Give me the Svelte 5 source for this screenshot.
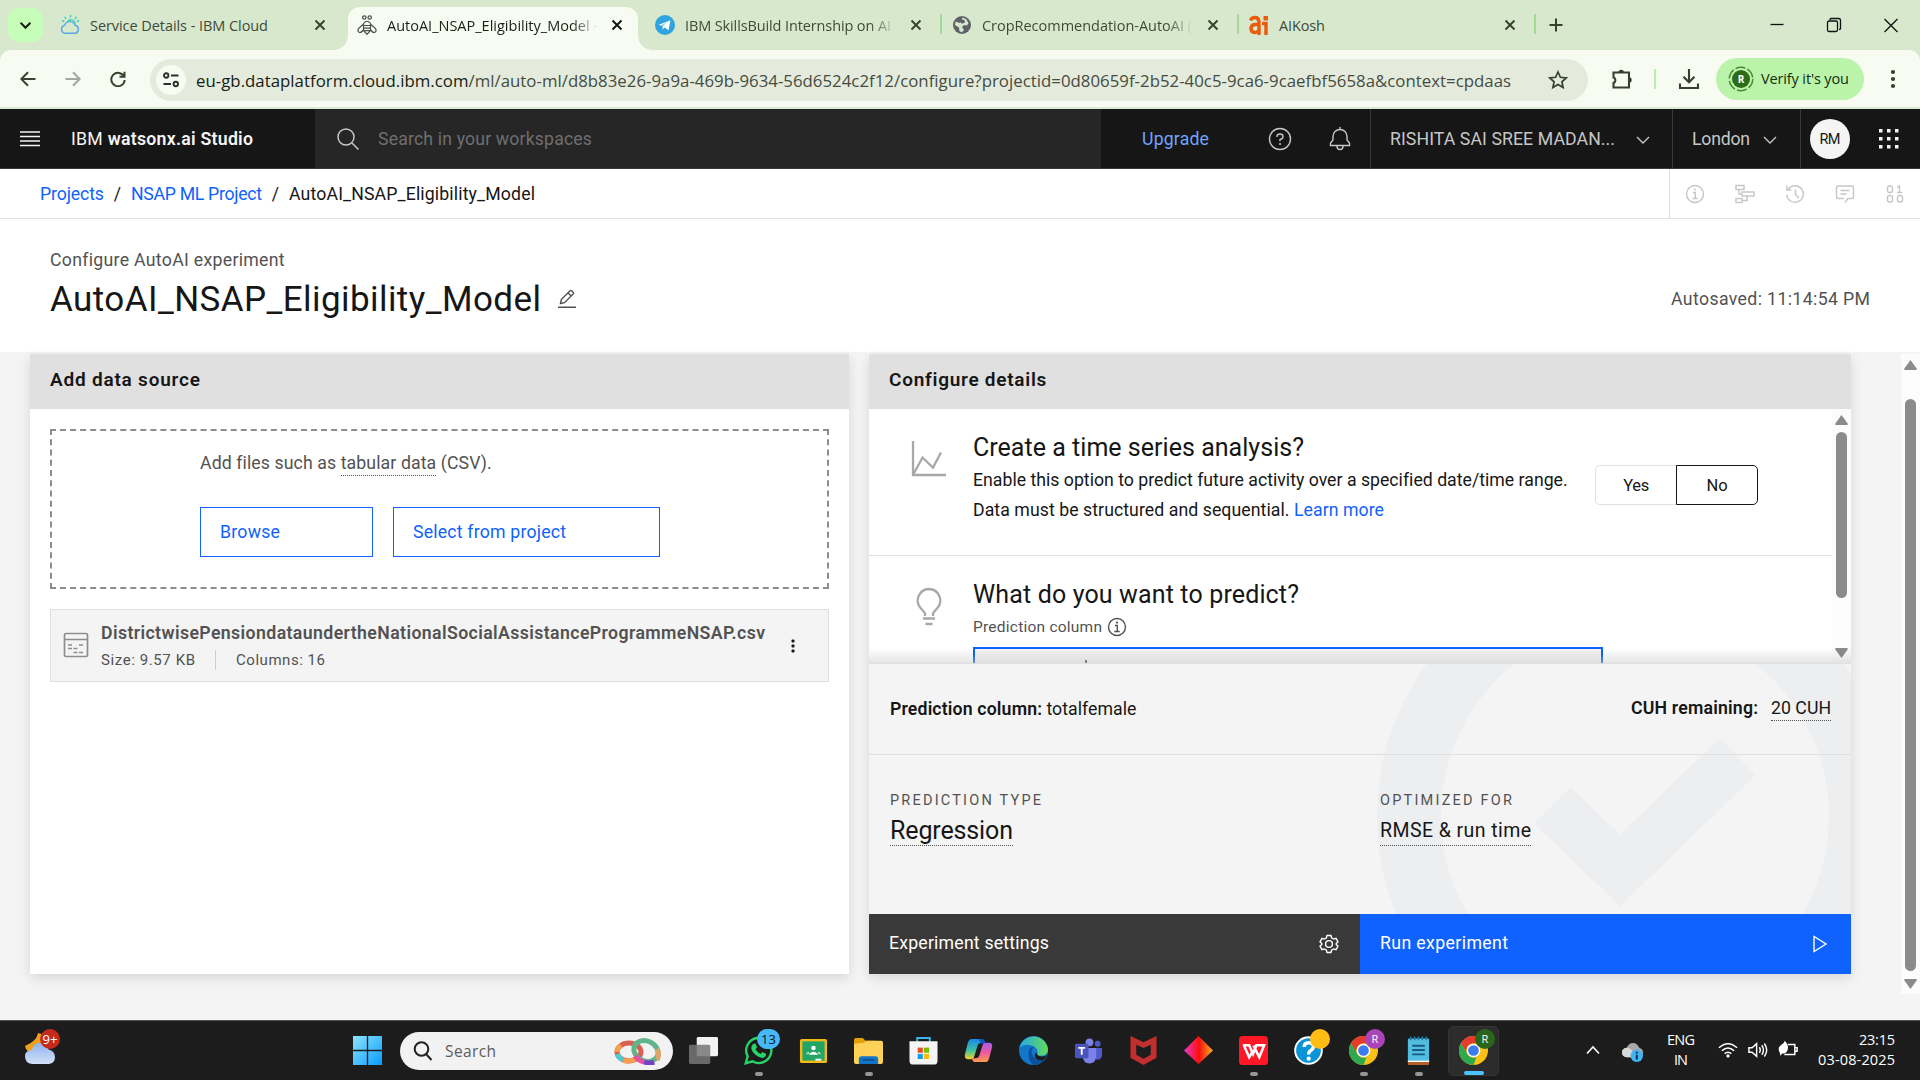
<script>
  // Spreads a label's letters so that it occupies the given width.
  function fit(node, width) {
    const chars = node.textContent.trim().length;
    const natural = node.getBoundingClientRect().width;
    node.style.letterSpacing = `${(width - natural) / Math.max(1, chars - 1)}px`;
    node.style.width = `${width}px`;
  }

  const tabs = [
    { icon: 'cloud', title: 'Service Details - IBM Cloud', width: 178 },
    { icon: 'bee', title: 'AutoAI_NSAP_Eligibility_Model -', width: 211, active: true },
    { icon: 'telegram', title: 'IBM SkillsBuild Internship on AI', width: 206, sep: true },
    { icon: 'globe', title: 'CropRecommendation-AutoAI (', width: 210, sep: true },
    { icon: 'kosh', title: 'AIKosh', width: 46, sep: true }
  ];

  const apps = [
    { id: 'taskview' },
    { id: 'whatsapp', badge: '13', tone: 'blue', open: true },
    { id: 'classroom' },
    { id: 'folder', open: true },
    { id: 'store' },
    { id: 'copilot' },
    { id: 'edge' },
    { id: 'teams' },
    { id: 'mcafee' },
    { id: 'diamond' },
    { id: 'wps', open: true },
    { id: 'help', badge: ' ', tone: 'yellow' },
    { id: 'chrome', badge: 'R', tone: 'purple', open: true },
    { id: 'notepad', open: true },
    { id: 'chrome', badge: 'R', tone: 'green', open: true, current: true }
  ];
</script>

{#snippet cross()}
  <svg class="x" viewBox="0 0 12 12"><path d="M1.5 1.5l9 9M10.5 1.5l-9 9" /></svg>
{/snippet}

{#snippet chevron()}
  <svg class="chev" viewBox="0 0 14 8"><path d="M1 1l6 6 6-6" /></svg>
{/snippet}

{#snippet favicon(id)}
  <svg class="fav" viewBox="0 0 20 20">
    {#if id === 'cloud'}
      <g fill="none" stroke="#5aa9e6" stroke-width="1.4">
        <path d="M5 18.3a4.1 4.1 0 0 1-.4-8 5.6 5.6 0 0 1 10.500 0 4.100 4.100 0 0 1 .2 8z" />
        <path stroke="#3fd0c0" d="M7.500 6.800a4 4 0 0 1 7.400 2.600M10.500 0v2.500M4.500 1.800l1.500 2.100M16.500 1.800l-1.500 2.100M2 5.500l2.200 1M19 5.500l-2 1" />
      </g>
    {:else if id === 'bee'}
      <g fill="none" stroke="#4c4f4a" stroke-width="1.200">
        <circle cx="7.300" cy="2.500" r="1.700" /><circle cx="12.700" cy="2.500" r="1.700" />
        <path d="M6.500 8.500q3.500-4.500 7 0v7l-3.500 3.800-3.500-3.800zM6.500 10.500h7M6.500 13.200h7M6.500 15.700h7M6 9.500L1.500 13.500q-1.500 3.300 1 4 2.500 0 3.500-2.500M14 9.500l4.500 4q1.500 3.300-1 4-2.500 0-3.500-2.500" />
      </g>
    {:else if id === 'telegram'}
      <circle cx="10" cy="10" r="10" fill="#2fa4de" />
      <path fill="#fff" d="M3.800 9.800L15.500 5.200l-2 10-3.800-2.800-1.900 1.900-.3-3.200 5-4.300-6.200 4z" />
    {:else if id === 'globe'}
      <circle cx="10" cy="10" r="9" fill="#5f6368" />
      <path fill="#d7e8cc" d="M10 2.500l4 1.500 2.500 4-1.500 2.500-3-.5-2 2 2 3-2 2.200-2.500-1-.5-3.700L3 10l.5-3.500L7.500 8l3-2z" />
      <path fill="#5f6368" d="M8.500 4.500l4 .5.5 2.500-3 1.200-2-1.700z" />
    {:else}
      <g fill="none" stroke="#ea5b0c" stroke-width="3.400">
        <path d="M1.500 5.500q1-3 4.500-3t4 4V20M9.500 9.500H6Q2 10 2 13.500t3.500 4q3 0 4.500-2.500M13 8.500h4V20" />
      </g>
      <rect x="14.500" y="1" width="4.500" height="4.500" fill="#ea5b0c" />
    {/if}
  </svg>
{/snippet}

{#snippet appIcon(id)}
  <svg class="app-icon" viewBox="0 0 30 30">
    {#if id === 'taskview'}
      <rect x="8" y="1" width="22" height="20" rx="1.500" fill="#f2f2f2" />
      <rect x="0" y="9" width="22" height="20" rx="1.500" fill="#777" fill-opacity=".85" />
    {:else if id === 'whatsapp'}
      <path fill="#1c1c1c" stroke="#25d366" stroke-width="2.500" d="M1.800 28.200l2-7.200a13 13 0 1 1 5 5.200z" />
      <path fill="#25d366" d="M9.500 8.300q1.500-1.300 2.600 0l1.300 3.200q-.3 1.200-1.500 2.300 2 3.700 5.200 4.800l1.900-2 3.600 1.700q.7 1-.7 3.200-2.500 2.400-7 0-6-3-7.300-8.200-.4-3.200 1.900-5z" />
    {:else if id === 'classroom'}
      <rect x="1" y="3" width="28" height="25" rx="2" fill="#f6b813" />
      <rect x="3.500" y="5.500" width="23" height="20" fill="#23a566" />
      <g fill="#fff"><circle cx="15" cy="12.500" r="2.300" /><path d="M10 19.500q5-6.500 10 0z" /><path fill="#a8dcc1" d="M7 18.800q3-4.500 4-1l-1.500 1zM23 18.800q-3-4.500-4-1l1.500 1z" /><rect x="17" y="23.500" width="6" height="2" /></g>
    {:else if id === 'folder'}
      <path fill="#e3a008" d="M0 4q0-2 2-2h7l3 3h10v7H0z" />
      <path fill="#ffd257" d="M0 8l10-1 3-2h15q2 0 2 2v20q0 2-2 2H2q-2 0-2-2z" />
      <path fill="#1374c8" d="M5 29v-5q0-3 3-3h14q3 0 3 3v5z" /><path stroke="#0b4a86" stroke-width="1.500" d="M9 24.700h12" />
    {:else if id === 'store'}
      <path fill="none" stroke="#37b6f2" stroke-width="2" d="M8.500 8V2h13v6" />
      <path fill="#f4f4f4" d="M.5 5.500h29v20q0 4-4 4h-21q-4 0-4-4z" />
      <path fill="#e84c22" d="M9 12h5.300v5.300H9z" /><path fill="#7fba00" d="M15.500 12h5.300v5.300h-5.300z" /><path fill="#0f9ae5" d="M9 18.500h5.300v5.300H9z" /><path fill="#fdb900" d="M15.500 18.500h5.300v5.300h-5.300z" />
    {:else if id === 'copilot'}
      <defs>
        <linearGradient id="cpA" x1="0" y1="0" x2="0" y2="1"><stop offset="0" stop-color="#1888e8" /><stop offset=".55" stop-color="#39bfa6" /><stop offset="1" stop-color="#f4d422" /></linearGradient>
        <linearGradient id="cpB" x1="0" y1="0" x2="0" y2="1"><stop offset="0" stop-color="#a85bea" /><stop offset=".5" stop-color="#ec5aa0" /><stop offset="1" stop-color="#ff9b4a" /></linearGradient>
      </defs>
      <path fill="url(#cpA)" d="M8 3h10q3 0 4 4h-4q-3 0-4 3l-3 10q-1 4-4 4H4q-4 0-3-5L4 7q1-4 4-4z" />
      <path fill="#1254c4" d="M15 3h3.500Q21 3 22 8h-4.500z" />
      <path fill="url(#cpB)" d="M22 27H12q-3 0-4-4h4q3 0 4-3l3-10q1-3 4-3h3q4 0 3 5l-3 11q-1 4-4 4z" />
    {:else if id === 'edge'}
      <defs><linearGradient id="edA" x1="0" y1="0" x2="1" y2="0"><stop offset="0" stop-color="#2aa8e4" /><stop offset="1" stop-color="#5fdc5a" /></linearGradient></defs>
      <circle cx="15" cy="15" r="15" fill="#1377c9" />
      <path fill="url(#edA)" d="M.5 12A15 15 0 0 1 30 14q0 6-7 6.500-5 0-4-3 1-4-4-7Q6 7 .5 12z" />
      <path fill="#1c1c1c" d="M19 17q-2 3 4 4.300 4 .3 6.500-2.300-2 4.500-5 7-7-.5-8-5-.5-3 2.500-4z" />
      <path fill="#0c4f9e" d="M10 17q0-6 6-6-5 3-2 9t12 5q-5 5-11 5Q9 25 10 17z" />
    {:else if id === 'teams'}
      <circle cx="16" cy="6.500" r="4" fill="#7b83eb" /><circle cx="24.500" cy="8" r="3" fill="#5059c9" />
      <path fill="#5059c9" d="M20 12.500h9v8q-1 4.500-6 4z" /><path fill="#7b83eb" d="M9 12.500h14v9q-1 7-7 7t-7-7z" />
      <rect x="1" y="8" width="14" height="15" rx="1.500" fill="#4b53bc" /><path fill="none" stroke="#fff" stroke-width="1.900" d="M4.500 12.200h7M8 12.200V19.500" />
    {:else if id === 'mcafee'}
      <path fill="#c22f2f" d="M1.500 0L15 6.500 28.500 0v22.500L15 30 1.500 22.500z" /><path fill="#1c1c1c" d="M7.500 9v10.300L15 23.500l7.500-4.200V9L15 12.500z" />
    {:else if id === 'diamond'}
      <defs><linearGradient id="dmA"><stop offset="0" stop-color="#e23ad0" /><stop offset=".5" stop-color="#ff1010" /><stop offset=".52" stop-color="#f01010" /><stop offset="1" stop-color="#ffb01c" /></linearGradient></defs>
      <path fill="url(#dmA)" d="M15 0l15 15-15 14L0 15z" />
    {:else if id === 'wps'}
      <rect width="30" height="30" rx="4" fill="#ff1726" />
      <path fill="none" stroke="#fff" stroke-width="2.600" d="M4 9.500h6.500l4 9 3.500-9h8l-5 12.500-6-12M5 9.500l5.500 12.500 4-7" />
    {:else if id === 'help'}
      <circle cx="15" cy="15" r="13.800" fill="#0a94d8" stroke="#fff" stroke-width="2" />
      <path fill="none" stroke="#fff" stroke-width="3.600" d="M10.500 11.500q0-4.500 4.800-4.500t4.700 4.200q0 2.500-3 4-1.800 1-1.800 4" /><circle cx="15.200" cy="23.500" r="2.200" fill="#fff" />
    {:else if id === 'chrome'}
      <circle cx="15" cy="15" r="15" fill="#fbc116" />
      <path fill="#e33b2e" d="M2 7.500A15 15 0 0 1 28 7.500H15a7.500 7.500 0 0 0-6.500 11.200z" />
      <path fill="#2da94f" d="M2 7.500l6.500 11.200A7.500 7.500 0 0 0 18 21.900L15 30A15 15 0 0 1 2 7.500z" />
      <circle cx="15" cy="15" r="7" fill="#fff" /><circle cx="15" cy="15" r="5.500" fill="#3a7cec" />
    {:else}
      <rect x="4" y="2.500" width="22" height="26" rx="1.500" fill="#53bde0" />
      <path fill="#fff" d="M4 25.500h22v1.500H4z" /><path fill="#b5622a" d="M4 27h22v2q0 1-1 1H5q-1 0-1-1z" />
      <path stroke="#155a80" stroke-width="2" d="M8.500 10h13M8.500 14.500h13M8.500 19h13" /><path stroke="#1e7ba6" stroke-width="1.600" d="M7 .5v4M11 .5v4M15 .5v4M19 .5v4M23 .5v4" />
    {/if}
  </svg>
{/snippet}

<div class="screen">
  <div class="tabstrip">
    <div class="tab-menu"><svg viewBox="0 0 12 8"><path d="M1.500 1.500L6 6l4.500-4.500" /></svg></div>
    <div class="tabs">
      {#each tabs as tab}
        <div class="tab" class:active={tab.active}>
          {@render favicon(tab.icon)}
          <div class="tab-title" class:faded={tab.width > 200}><span class="t" use:fit={tab.width}>{tab.title}</span></div>
          {@render cross()}
          {#if tab.sep}<i class="tab-sep"></i>{/if}
        </div>
      {/each}
    </div>
    <svg class="plus" viewBox="0 0 14 14"><path d="M7 .5v13M.5 7h13" /></svg>
    <div class="window-buttons">
      <svg viewBox="0 0 16 16"><path d="M1.500 7.500h13" /></svg>
      <svg viewBox="0 0 16 16"><rect x="1.500" y="4" width="10" height="10.500" rx="1.500" /><path d="M4 3V2.500q0-1 1-1h7.500q2 0 2 2v8q0 1-1.500 1" /></svg>
      <svg viewBox="0 0 16 16"><path d="M1.500 2l13 13M14.500 2l-13 13" /></svg>
    </div>
  </div>

  <div class="toolbar-back"><div class="toolbar">
    <svg class="nav" viewBox="0 0 16 16"><path d="M15.500 8H1.500M8 1.300L1.300 8 8 14.700" /></svg>
    <svg class="nav off" viewBox="0 0 16 16"><path d="M.5 8h14M8 1.300L14.700 8 8 14.700" /></svg>
    <svg class="nav" viewBox="0 0 16 16"><path d="M14 5.500A6.700 6.700 0 1 0 14.700 9M14.500 .8v5h-5" /></svg>
    <div class="omnibox">
      <div class="site"><svg viewBox="0 0 16 16"><circle cx="3.200" cy="3.500" r="2.200" /><path d="M8 3.500h7.500M.5 12h7.500" /><circle cx="12.800" cy="12" r="2.200" /></svg></div>
      <span class="t url" use:fit={1315}><b>eu-gb.dataplatform.cloud.ibm.com</b>/ml/auto-ml/d8b83e26-9a9a-469b-9634-56d6524c2f12/configure?projectid=0d80659f-2b52-40c5-9ca6-9caefbf5658a&amp;context=cpdaas</span>
      <svg class="star" viewBox="0 0 20 20"><path d="M10 2l2.400 5.300 5.800.6-4.300 3.900 1.200 5.700L10 14.600l-5.100 2.900 1.200-5.700L1.800 7.900l5.800-.6z" /></svg>
    </div>
    <svg class="tool puzzle" viewBox="0 0 22 22"><path d="M2.500 4.500h15.500v15H2.500v-4.700a2.800 2.800 0 0 0 0-5.300z" /><path class="solid" d="M7.500 4.500a2.700 2.700 0 0 1 5.400 0zM18 9.300a2.700 2.700 0 0 1 0 5.400z" /></svg>
    <i class="tool-sep"></i>
    <svg class="tool" viewBox="0 0 22 22"><path d="M11 1v13M5.500 8.800L11 14.300l5.500-5.500M2 15.500V20h18v-4.500" /></svg>
    <div class="verify">
      <svg viewBox="0 0 26 26"><circle class="dash" cx="13" cy="13" r="11.700" /><circle class="disc" cx="13" cy="13" r="9" /><text x="13" y="16.500">R</text></svg>
      <span class="t" use:fit={88}>Verify it's you</span>
    </div>
    <svg class="kebab" viewBox="0 0 6 20"><circle cx="3" cy="3" r="2.100" /><circle cx="3" cy="10" r="2.100" /><circle cx="3" cy="17" r="2.100" /></svg>
  </div></div>

  <header class="ibm">
    <div class="brand">
      <svg viewBox="0 0 20 16"><path d="M0 1h20M0 5.500h20M0 10h20M0 14.500h20" /></svg>
      <span class="t" use:fit={182}>IBM <b>watsonx.ai Studio</b></span>
    </div>
    <div class="search">
      <svg viewBox="0 0 24 24"><circle cx="10" cy="10" r="8" /><path d="M16 16l6.500 6.500" /></svg>
      <span class="t" use:fit={214}>Search in your workspaces</span>
    </div>
    <div class="upgrade"><span class="t" use:fit={67}>Upgrade</span></div>
    <div class="cell"><svg class="hi" viewBox="0 0 24 24"><circle cx="12" cy="12" r="10.500" /><path d="M9 10V9.500Q9 7 12 7t3 2.500-3 3v1.800" /><circle class="dot" cx="12" cy="17" r="1" /></svg></div>
    <div class="cell"><svg class="hi" viewBox="0 0 24 24"><path d="M12 0v2.500M2.500 18.500v-2.500l2.500-3V9.500a7 7 0 0 1 14 0V13l2.500 3v2.500zM9 18.500v1a3 3 0 0 0 6 0v-1" /></svg></div>
    <div class="account"><span class="t" use:fit={225}>RISHITA SAI SREE MADAN...</span>{@render chevron()}</div>
    <div class="region"><span class="t" use:fit={58}>London</span>{@render chevron()}</div>
    <div class="profile"><div class="avatar"><span class="t" use:fit={21}>RM</span></div></div>
    <svg class="grid" viewBox="0 0 20 20">{#each [0, 8, 16] as y}{#each [0, 8, 16] as x}<rect {x} {y} width="3.500" height="3.500" />{/each}{/each}</svg>
  </header>

  <nav class="crumbs">
    <a class="t" use:fit={64}>Projects</a><i>/</i><a class="t" use:fit={131}>NSAP ML Project</a><i>/</i><span class="t" use:fit={246}>AutoAI_NSAP_Eligibility_Model</span>
    <div class="crumb-tools">
      <svg viewBox="0 0 20 20"><circle cx="10" cy="10" r="8.500" /><path d="M8 8.500h2.300v6M7.500 14.500h5.200" /><circle class="dot" cx="10" cy="5.600" r="1" /></svg>
      <svg viewBox="0 0 20 20"><rect x="1" y="1.500" width="8" height="4" /><rect x="7" y="8" width="12" height="4" /><rect x="1" y="14.500" width="6" height="4" /><path d="M4 5.500V10h3M12 12v4.500H7" /></svg>
      <svg viewBox="0 0 20 20"><path d="M3 5.500a8.300 8.300 0 1 1-1.300 5M1.800 1.500V6h4.500M10.500 5.500v5l3.500 3.500" /></svg>
      <svg viewBox="0 0 20 20"><path d="M10 18.500l2.800-4H17q1.500 0 1.500-1.500V3.500Q18.500 2 17 2H3Q1.500 2 1.500 3.500V13q0 1.500 1.500 1.500h6M5.500 6.500h9M5.500 10h6" /></svg>
      <svg viewBox="0 0 20 20"><rect x="2.500" y="2" width="5" height="6.500" rx="2" /><path d="M12 3.300l2.500-1.300v6.500M12 8.500h5.500" /><rect x="2.500" y="11.500" width="5" height="6.500" rx="2" /><rect x="12.500" y="11.500" width="5" height="6.500" rx="2" /></svg>
    </div>
  </nav>

  <section class="heading">
    <p><span class="t" use:fit={234}>Configure AutoAI experiment</span></p>
    <div class="title-row">
      <h1 class="t" use:fit={491}>AutoAI_NSAP_Eligibility_Model</h1>
      <svg viewBox="0 0 20 20"><path d="M1 18.300h18M3.500 14.500l.8-4L13 1.800q.8-.8 1.600 0l1.600 1.600q.8.800 0 1.600L7.500 13.700zM11 3.800l3.200 3.200" /></svg>
      <span class="t saved" use:fit={199}>Autosaved: 11:14:54 PM</span>
    </div>
  </section>

  <main>
    <div class="card left">
      <h2><span class="t" use:fit={150}>Add data source</span></h2>
      <div class="left-body">
        <div class="drop">
          <p><span class="t" use:fit={291}>Add files such as <u>tabular data</u> (CSV).</span></p>
          <div class="drop-buttons">
            <button class="browse"><span class="t" use:fit={60}>Browse</span></button>
            <button class="select"><span class="t" use:fit={153}>Select from project</span></button>
          </div>
        </div>
        <div class="file">
          <svg class="file-icon" viewBox="0 0 26 26"><rect x="1.500" y="1.500" width="23" height="23" rx="1.500" /><path d="M1.500 7.500h23M5 13h4M16 13h4M5 16.500h4M10.500 16.500h4M10.500 20.500h4M16 20.500h4" /></svg>
          <div class="file-text">
            <span class="t file-name" use:fit={664}>DistrictwisePensiondataundertheNationalSocialAssistanceProgrammeNSAP.csv</span>
            <div class="meta"><span class="t" use:fit={94}>Size: 9.57 KB</span><i></i><span class="t" use:fit={89}>Columns: 16</span></div>
          </div>
          <svg class="file-menu" viewBox="0 0 4 16"><rect x=".5" y="1.500" width="3" height="3" rx="1" /><rect x=".5" y="6.500" width="3" height="3" rx="1" /><rect x=".5" y="11.500" width="3" height="3" rx="1" /></svg>
        </div>
      </div>
    </div>

    <div class="card right">
      <h2><span class="t" use:fit={157}>Configure details</span></h2>
      <div class="scroll">
        <div class="options">
          <div class="option first">
            <svg class="opt-icon" viewBox="0 0 36 36"><path d="M2 0v34h33M2 34l9.500-17.500L22 26.500l8-15" /></svg>
            <div class="opt-text">
              <h3 class="t" use:fit={331}>Create a time series analysis?</h3>
              <p><span class="t" use:fit={594}>Enable this option to predict future activity over a specified date/time range.</span></p>
              <p><span class="t" use:fit={411}>Data must be structured and sequential. <a>Learn more</a></span></p>
            </div>
            <div class="toggle"><button><span class="t" use:fit={26}>Yes</span></button><button class="on"><span class="t" use:fit={21}>No</span></button></div>
          </div>
          <div class="option second">
            <svg class="opt-icon" viewBox="0 0 36 36"><path d="M14 26v-2.500q-1-2-4-5A11.500 11.500 0 0 1 18 -1a11.500 11.500 0 0 1 8 19.500q-3 3-4 5V26M12 28.500h12M14.500 34h7" /></svg>
            <div class="opt-text">
              <h3 class="t" use:fit={326}>What do you want to predict?</h3>
              <div class="label"><span class="t" use:fit={129}>Prediction column</span><svg viewBox="0 0 20 20"><circle cx="10" cy="10" r="8.500" /><path d="M8 8.500h2.300v6M7.300 14.500h5.400" /><circle class="dot" cx="10" cy="5.600" r="1.100" /></svg></div>
              <div class="input"><i></i></div>
            </div>
          </div>
        </div>
        <div class="bar"><i class="up"></i><i class="thumb"></i><i class="down"></i></div>
        <div class="shade"></div>
      </div>
      <div class="summary">
        <svg class="mark" viewBox="0 0 982 250"><circle cx="766" cy="152" r="226" /><path d="M665 159.500l36.500-36L751 170.500 851 74l35.500 37L751 242z" /></svg>
        <div class="row one">
          <span><b class="t" use:fit={152}>Prediction column:</b> <span class="t val" use:fit={90}>totalfemale</span></span>
          <span><b class="t" use:fit={127}>CUH remaining:</b><span class="t dotted cuh" use:fit={60}>20 CUH</span></span>
        </div>
        <div class="row two">
          <div><span class="t cap" use:fit={151}>PREDICTION TYPE</span><span class="t dotted big" use:fit={123}>Regression</span></div>
          <div><span class="t cap" use:fit={132}>OPTIMIZED FOR</span><span class="t dotted mid" use:fit={151}>RMSE &amp; run time</span></div>
        </div>
      </div>
      <div class="actions">
        <button class="settings"><span class="t" use:fit={160}>Experiment settings</span>
          <svg viewBox="0 0 20 20"><path d="M8 1.500h4l.6 2.400 2 1.200 2.400-.7 2 3.400-1.800 1.700v1l1.800 1.700-2 3.400-2.400-.7-2 1.200-.6 2.400H8l-.6-2.400-2-1.200-2.400.7-2-3.400 1.800-1.700v-1L1 7.800l2-3.400 2.400.7 2-1.200z" /><circle cx="10" cy="10" r="3.400" /></svg>
        </button>
        <button class="run"><span class="t" use:fit={128}>Run experiment</span>
          <svg viewBox="0 0 20 20"><path d="M4 2.500v15l12-7.500z" /></svg>
        </button>
      </div>
    </div>
    <div class="bar page-bar"><i class="up"></i><i class="thumb"></i><i class="down"></i></div>
  </main>

  <footer>
    <div class="weather">
      <svg viewBox="0 0 34 40"><path fill="#f0a11c" d="M13 6q-1 8-13 13 1 6 8 7l12-5V8z" /><defs><linearGradient id="wx" x1="0" y1="0" x2="0" y2="1"><stop offset="0" stop-color="#8fb3ee" /><stop offset="1" stop-color="#d3e0f8" /></linearGradient></defs><path fill="url(#wx)" d="M7 37q-7-1-7-7.500T7 23q1-7 8-7t8.500 6.500Q30 24 30 30t-6 7z" /></svg>
      <span class="wx-badge">9+</span>
    </div>
    <svg class="start" viewBox="0 0 30 30"><defs><linearGradient id="win" x1="0" y1="0" x2="1" y2="1"><stop offset="0" stop-color="#8be4ff" /><stop offset="1" stop-color="#0a9bff" /></linearGradient></defs><path fill="url(#win)" d="M0 0h14.300v14.300H0zM15.700 0H30v14.300H15.700zM0 15.700h14.300V30H0zM15.700 15.700H30V30H15.700z" /></svg>
    <div class="find">
      <svg class="lens" viewBox="0 0 20 20"><circle cx="8.500" cy="8" r="6.800" /><path d="M13 13l5.500 6" /></svg>
      <span class="t" use:fit={51}>Search</span>
      <svg class="rings" viewBox="0 0 48 28">
        <g fill="none" stroke-width="5">
          <ellipse cx="15" cy="15" rx="12" ry="9" stroke="#d9604f" />
          <path stroke="#f6a04d" d="M9 23.300q6 2 12-1M3 15q0-4 4-6.500" /><path stroke="#4ecbd2" d="M3.500 17q1 4 5.500 6" />
          <ellipse cx="32" cy="14" rx="12.500" ry="10" transform="rotate(25 32 14)" stroke="#5fb58c" />
          <path stroke="#e94fa0" d="M21 19q4 5 9 6" /><path stroke="#7a3fc8" d="M30 25q6 2 10 0" /><path stroke="#e0a468" d="M43 12q3 6 0 11" />
        </g>
      </svg>
    </div>
    <div class="apps">
      {#each apps as app}
        <div class="app" class:current={app.current} class:open={app.open}>
          {@render appIcon(app.id)}
          {#if app.badge}<span class="badge {app.tone}">{app.badge}</span>{/if}
        </div>
      {/each}
    </div>
    <div class="tray">
      <svg class="tray-chev" viewBox="0 0 14 10"><path d="M1 8.500L7 2l6 6.500" /></svg>
      <svg class="onedrive" viewBox="0 0 22 22"><path fill="#a9a9a9" d="M5 17q-5-.5-5-5t5-5q2-5 6.500-5T18 7q4 1 4 5t-4 5z" /><path fill="#d8d8d8" d="M5 17q-5-.5-5-5t5-5q4 0 6 4l5 6z" /><circle cx="15.500" cy="15.500" r="6.500" fill="#3fb5f5" /><path stroke="#12293a" stroke-width="2" d="M15.500 14.500v5M15.500 11.200v2" /></svg>
      <div class="lang"><span class="t" use:fit={28}>ENG</span><span class="t" use:fit={14}>IN</span></div>
      <svg class="wifi" viewBox="0 0 22 18"><path d="M1 6.500q10-9 20 0M4.200 9.800q6.800-6 13.600 0M7.300 13q3.700-3.200 7.400 0" /><circle cx="11" cy="15.500" r="1.800" /></svg>
      <svg class="sound" viewBox="0 0 22 18"><path d="M1 6.500h3.500L9.500 2v14l-5-4.500H1zM12.500 6q2 3 0 6M15.200 3.800q3.600 5.200 0 10.400M18 1.800q5.200 7.200 0 14.400" /></svg>
      <svg class="battery" viewBox="0 0 22 20"><path d="M11 5h7.500v11H7M19 8.500h2v4h-2" /><path class="leaf" d="M2 14q-3-5 1-8Q7 4 7.500 1q5 5 3 10-1 4-6 4l-2 2.500z" /></svg>
      <div class="clock"><span class="t" use:fit={36}>23:15</span><span class="t" use:fit={77}>03-08-2025</span></div>
    </div>
  </footer>
</div>

<style>
  :global(body) { background: #f4f4f4; overflow: hidden; }
  .screen { width: 1920px; height: 1080px; display: flex; flex-direction: column; font-family: Roboto, "Liberation Sans", sans-serif; font-size: 17.7px; color: #161616; overflow: hidden; }
  .screen *, .screen { box-sizing: border-box; }
  .t { display: inline-block; white-space: nowrap; }
  svg { display: block; flex: none; fill: none; }
  button { font: inherit; color: inherit; background: none; border: 0; padding: 0; display: flex; align-items: center; }
  h1, h2, h3, p { margin: 0; font-weight: 400; }
  i { font-style: normal; }

  .tabstrip, .toolbar, footer { font-family: "Open Sans", "Noto Sans", sans-serif; }
  .tabstrip { height: 50px; flex: none; display: flex; align-items: center; background: #d7e8cc; color: #3f4a3a; font-size: 14.5px; }
  .tab-menu { width: 35px; height: 34px; margin: 0 8px; border-radius: 11px; background: #c6fdb9; display: grid; place-items: center; }
  .tab-menu svg { width: 13px; height: 9px; stroke: #16240f; stroke-width: 2; }
  .tabs { display: flex; align-self: stretch; }
  .tab { position: relative; width: 297px; height: 100%; padding: 0 20px 0 9px; display: flex; align-items: center; }
  .tab:first-child { padding: 0 22px 0 8px; }
  .tab.active { background: #f7fbf1; margin: 7px 7px 0 0; width: 290px; height: 43px; padding: 0 15px 7px 8px; border-radius: 12px 12px 0 0; color: #1b2117; }
  .tab.active::before, .tab.active::after { content: ""; position: absolute; bottom: 0; width: 14px; height: 14px; }
  .tab.active::before { left: -14px; background: radial-gradient(circle at 0 0, #d7e8cc 13.5px, #f7fbf1 14px); }
  .tab.active::after { right: -14px; background: radial-gradient(circle at 100% 0, #d7e8cc 13.5px, #f7fbf1 14px); }
  .fav { width: 20px; height: 20px; margin: 0 10px 0 1px; }
  .tab-title { flex: 1; overflow: hidden; padding-top: 1px; }
  .tab-title.faded { -webkit-mask-image: linear-gradient(90deg, #000 185px, transparent 211px); mask-image: linear-gradient(90deg, #000 185px, transparent 211px); }
  .x { width: 12px; height: 12px; stroke: #35402f; stroke-width: 1.9; }
  .active .x { stroke: #10150d; }
  .tab-sep { position: absolute; right: 0; top: 14px; width: 2px; height: 20px; background: #9fdc92; }
  .plus { width: 14px; height: 14px; margin-left: 13px; stroke: #35402f; stroke-width: 2; }
  .window-buttons { margin: 0 21px 0 auto; display: flex; gap: 41px; }
  .window-buttons svg { width: 16px; height: 16px; stroke: #111; stroke-width: 1.3; }

  .toolbar-back { height: 59px; flex: none; background: #d7e8cc; }
  .toolbar { height: 59px; display: flex; align-items: center; padding: 0 24px 0 20px; background: #f7fbf1; border-bottom: 2px solid #dce8d8; border-radius: 11px 11px 0 0; }
  .nav { width: 16px; height: 16px; margin-right: 29px; stroke: #36442f; stroke-width: 2; }
  .nav.off { stroke: #a3a89f; }
  .nav:nth-child(3) { margin-right: 24px; }
  .omnibox { width: 1438px; height: 42px; margin-top: 2px; border-radius: 21px; background: #e4ebdd; display: flex; align-items: center; padding: 0 20px 0 6px; }
  .site { width: 30px; height: 30px; border-radius: 50%; background: #f7fbf1; display: grid; place-items: center; margin-right: 10px; }
  .site svg { width: 16px; height: 16px; stroke: #2a3126; stroke-width: 1.9; }
  .url { font-size: 16.8px; color: #454c41; padding-top: 1px; }
  .url b { font-weight: 400; color: #171c14; }
  .star { width: 20px; height: 20px; margin-left: auto; stroke: #33402d; stroke-width: 1.7; }
  .tool { width: 22px; height: 22px; stroke: #33402d; stroke-width: 2.1; }
  .tool .solid { fill: #33402d; stroke: none; }
  .puzzle { margin: 0 21px 0 23px; }
  .tool-sep { width: 2px; height: 20px; background: #b7eea9; margin-right: 22px; }
  .verify { width: 148px; height: 42px; margin-left: 16px; border-radius: 21px; background: #bbf3aa; display: flex; align-items: center; gap: 7px; padding-left: 12px; font-size: 14.5px; color: #12300a; }
  .verify svg { width: 26px; height: 26px; }
  .dash { stroke: #4a8a35; stroke-width: 1.5; stroke-dasharray: 10 2.300; }
  .disc { fill: #2c6b1a; }
  .verify text { fill: #fff; font-size: 10px; font-weight: 700; text-anchor: middle; }
  .kebab { width: 6px; height: 20px; margin-left: auto; fill: #33402d; }

  .ibm { height: 60px; flex: none; display: flex; align-items: stretch; background: #161616; border-bottom: 1px solid #393939; color: #c6c6c6; }
  .brand { width: 315px; display: flex; align-items: center; gap: 31px; padding-left: 20px; color: #f4f4f4; }
  .brand svg { width: 20px; height: 16px; stroke: #f4f4f4; stroke-width: 1.4; }
  b { font-weight: 600; }
  .search { width: 786px; background: #262626; display: flex; align-items: center; padding-left: 21px; gap: 18px; color: #6f6f6f; }
  .search svg { width: 24px; height: 24px; stroke: #c6c6c6; stroke-width: 1.5; }
  .upgrade { width: 149px; display: flex; align-items: center; padding-left: 41px; color: #6ea4ff; }
  .cell { width: 60px; display: grid; place-items: center; }
  .hi { width: 24px; height: 24px; stroke: #c6c6c6; stroke-width: 1.4; }
  .dot { fill: currentColor; stroke: none; }
  .account { width: 302px; border-left: 1px solid #393939; display: flex; align-items: center; padding-left: 19px; }
  .chev { width: 14px; height: 8px; margin: 3px 0 0 21px; stroke: #c6c6c6; stroke-width: 1.4; }
  .region { width: 128px; border-left: 1px solid #393939; display: flex; align-items: center; padding-left: 19px; }
  .region .chev { margin-left: 13px; }
  .profile { border-left: 1px solid #393939; padding: 10px 0 0 9px; }
  .avatar { width: 40px; height: 40px; border-radius: 50%; background: #f4f4f4; color: #161616; display: grid; place-items: center; font-size: 14.500px; }
  .grid { width: 20px; height: 20px; margin: 20px 0 0 29px; fill: #f4f4f4; }

  .crumbs { height: 50px; flex: none; background: #fff; border-bottom: 1px solid #e0e0e0; display: flex; align-items: center; padding-left: 40px; }
  .crumbs a, .opt-text a { color: #0f62fe; }
  .crumbs i { width: 27px; text-align: center; }
  .crumb-tools { margin-left: auto; align-self: stretch; width: 251px; border-left: 1px solid #e0e0e0; display: flex; align-items: center; gap: 30px; padding-left: 15px; color: #c6c6c6; }
  .crumb-tools svg { width: 20px; height: 20px; stroke: #c6c6c6; stroke-width: 1.4; }

  .heading { height: 133px; flex: none; background: #fff; padding: 29px 50px 0; color: #525252; }
  .heading p { height: 24px; line-height: 24px; }
  .title-row { display: flex; align-items: center; height: 44px; margin-top: 6px; }
  h1 { font-size: 35px; line-height: 44px; color: #161616; }
  .title-row svg { width: 20px; height: 20px; margin: 0 0 3px 16px; stroke: #525252; stroke-width: 1.4; }
  .saved { margin-left: auto; margin-bottom: 3px; }

  main { height: 668px; flex: none; background: #f4f4f4; display: flex; align-items: flex-start; padding: 2px 0 0 30px; }
  .card { height: 620px; background: #fff; box-shadow: 0 4px 12px rgba(0, 0, 0, .12); display: flex; flex-direction: column; }
  .left { width: 819px; margin-right: 20px; }
  .right { width: 982px; }
  h2 { height: 55px; flex: none; background: #e0e0e0; padding-left: 20px; line-height: 52px; font-weight: 600; font-size: 19px; }
  .left-body { padding: 20px; }
  .drop { height: 160px; border: 2px dashed #8d8d8d; padding: 20px 0 0 148px; color: #525252; }
  .drop p { line-height: 24px; height: 24px; }
  u { text-decoration: none; border-bottom: 1px dotted #525252; padding-bottom: 2px; }
  .drop-buttons { display: flex; gap: 20px; margin-top: 32px; }
  .drop button { height: 50px; border: 1px solid #0f62fe; color: #0f62fe; padding-left: 19px; }
  .browse { width: 173px; }
  .select { width: 267px; }
  .file { height: 73px; margin-top: 20px; background: #f4f4f4; border: 1px solid #e0e0e0; display: flex; align-items: center; padding: 0 33px 2px 12px; color: #525252; }
  .file-icon { width: 26px; height: 26px; margin-right: 12px; stroke: #8d8d8d; stroke-width: 1.7; }
  .file-text { display: flex; flex-direction: column; gap: 3px; margin-top: 2px; }
  .file-name { font-weight: 600; line-height: 26px; height: 26px; margin-top: -1px; }
  .meta { display: flex; align-items: center; height: 22px; font-size: 15px; }
  .meta i { width: 1px; height: 20px; background: #d0d0d0; margin: 0 20px; }
  .file-menu { width: 4px; height: 16px; margin: 2px 0 0 auto; fill: #161616; }

  .scroll { position: relative; height: 254px; flex: none; display: flex; overflow: hidden; }
  .options { width: 963px; }
  .option { display: flex; padding: 23px 0 0 42px; }
  .first { height: 147px; border-bottom: 1px solid #e0e0e0; }
  .opt-icon { width: 36px; height: 36px; margin: 9px 26px 0 0; stroke: #a8a8a8; stroke-width: 2.3; overflow: visible; }
  .second .opt-icon { margin-top: 11px; }
  .opt-text { width: 630px; }
  h3 { font-size: 25px; height: 32px; line-height: 32px; }
  .opt-text p { line-height: 30px; height: 30px; }
  .opt-text h3 + p { margin-top: 1px; }
  .toggle { display: flex; margin: 33px 0 0 -8px; font-size: 16.500px; height: 40px; }
  .toggle button { width: 81px; height: 40px; justify-content: center; border: 1px solid #e0e0e0; border-right: 0; border-radius: 5px 0 0 5px; }
  .toggle .on { width: 82px; border: 1px solid #161616; border-radius: 0 5px 5px 0; }
  .label { display: flex; align-items: center; gap: 5px; height: 22px; margin-top: 5px; font-size: 15.5px; color: #525252; }
  .label svg { width: 20px; height: 20px; stroke: #525252; stroke-width: 1.4; }
  .input { height: 50px; margin-top: 9px; border: 2px solid #0f62fe; background: #f4f4f4; }
  .input i { display: block; width: 2px; height: 3px; margin: 11px 0 0 110px; background: #555; }
  .shade { position: absolute; left: 0; right: 0; bottom: 0; height: 15px; background: linear-gradient(transparent, rgba(80, 80, 80, .15)); }
  .second .input { mask-image: linear-gradient(#000 8px, rgba(0, 0, 0, .65) 16px); }
  .bar { width: 19px; background: #fcfcfc; display: flex; flex-direction: column; align-items: center; }
  .bar .up, .bar .down { width: 13px; height: 10px; background: #8b8b8b; clip-path: polygon(50% 0, 100% 90%, 94% 100%, 6% 100%, 0 90%); flex: none; }
  .bar .down { transform: scaleY(-1); margin-top: auto; }
  .bar .thumb { width: 11px; border-radius: 6px; background: #8b8b8b; }
  .scroll .up { margin-top: 6px; }
  .scroll .thumb { height: 166px; margin-top: 7px; }
  .scroll .down { margin-bottom: 5px; }
  .page-bar { margin-left: 50px; height: 640px; }
  .page-bar .up { margin-top: 6px; }
  .page-bar .thumb { height: 572px; margin-top: 29px; }
  .page-bar .down { margin-bottom: 5px; }

  .summary { position: relative; height: 251px; border-top: 1px solid #e0e0e0; background: #f4f4f4; }
  .mark { position: absolute; left: 0; top: 0; width: 982px; height: 250px; }
  .mark circle { stroke: #edeef0; stroke-width: 64; }
  .mark path { fill: #edeef0; }
  .row { position: relative; display: flex; padding-left: 21px; }
  .one { height: 91px; border-bottom: 1px solid #e0e0e0; align-items: center; justify-content: space-between; padding-right: 20px; }
  .dotted { border-bottom: 1px dotted #525252; }
  .cuh { margin-left: 13px; line-height: 23px; }
  .two { padding-top: 35px; }
  .two div { flex: none; width: 490px; display: flex; flex-direction: column; align-items: flex-start; }
  .cap { font-size: 14.500px; color: #525252; line-height: 22px; height: 22px; }
  .big { font-size: 25px; line-height: 37px; height: 34px; }
  .mid { font-size: 19.500px; line-height: 37px; height: 34px; }
  .actions { height: 60px; display: flex; color: #fff; }
  .actions button { width: 491px; justify-content: space-between; padding: 0 21px 2px 20px; }
  .actions svg { width: 20px; height: 20px; margin-top: 2px; stroke: #fff; stroke-width: 1.4; }
  .settings { background: #393939; }
  .run { background: #0f62fe; }

  footer { height: 60px; flex: none; background: #1c1c1c; border-top: 1px solid #505250; display: flex; align-items: center; color: #fff; font-size: 14.500px; }
  .weather { position: relative; width: 353px; height: 60px; padding: 3px 0 0 25px; }
  .weather svg { width: 34px; height: 40px; margin-top: 3px; }
  .wx-badge, .badge { position: absolute; display: grid; place-items: center; border-radius: 50%; font-size: 13px; }
  .wx-badge { left: 40px; top: 8px; width: 20px; height: 20px; background: #c42b1c; }
  .start { width: 29px; height: 29px; }
  .find { width: 273px; height: 38px; margin-left: 18px; border-radius: 19px; background: #f2f2f2; display: flex; align-items: center; padding: 0 11px 0 13px; color: #5c5c5c; }
  .find { font-size: 15.500px; }
  .lens { width: 20px; height: 20px; margin-right: 12px; stroke: #222; stroke-width: 2; }
  .rings { width: 48px; height: 28px; margin-left: auto; }
  .apps { display: flex; margin-left: 3px; }
  .app { position: relative; width: 51px; height: 50px; margin: 0 2px; border-radius: 5px; display: grid; place-items: center; }
  .app-icon { width: 29px; height: 29px; }
  .app.current { background: #2c2c2c; border: 1px solid #343434; }
  .open::after { content: ""; position: absolute; bottom: 0; left: 50%; width: 8px; height: 4px; margin-left: -4px; border-radius: 2px; background: #959595; }
  .current::after { width: 20px; margin-left: -10px; background: #4cc2ff; }
  .badge { left: 27px; top: 3px; width: 20px; height: 20px; font-size: 11px; color: #fff; }
  .current .badge { left: 26px; top: 2px; }
  .blue { width: 23px; background: #45b8fc; color: #111; font-size: 13px; left: 24px; border-radius: 11px; }
  .yellow { background: #ffbc12; }
  .purple { background: #a844b8; }
  .green { background: #2b651b; }
  .tray { display: flex; align-items: center; margin-left: 85px; flex: 1; padding: 0 25px 2px 0; }
  .tray svg { stroke: #fff; stroke-width: 1.6; }
  .tray-chev { width: 14px; height: 10px; }
  .tray .onedrive { width: 21px; height: 21px; margin: 4px 0 0 22px; stroke: none; }
  .lang { width: 28px; margin-left: 24px; display: flex; flex-direction: column; align-items: center; line-height: 20px; }
  .wifi { width: 20px; height: 18px; margin-left: 23px; }
  .wifi circle { fill: #fff; stroke: none; }
  .sound { width: 20px; height: 18px; margin-left: 10px; }
  .battery { width: 20px; height: 20px; margin: -2px 0 0 10px; }
  .leaf { fill: #fff; stroke: none; }
  .clock { margin-left: auto; display: flex; flex-direction: column; align-items: flex-end; line-height: 20px; }
</style>
